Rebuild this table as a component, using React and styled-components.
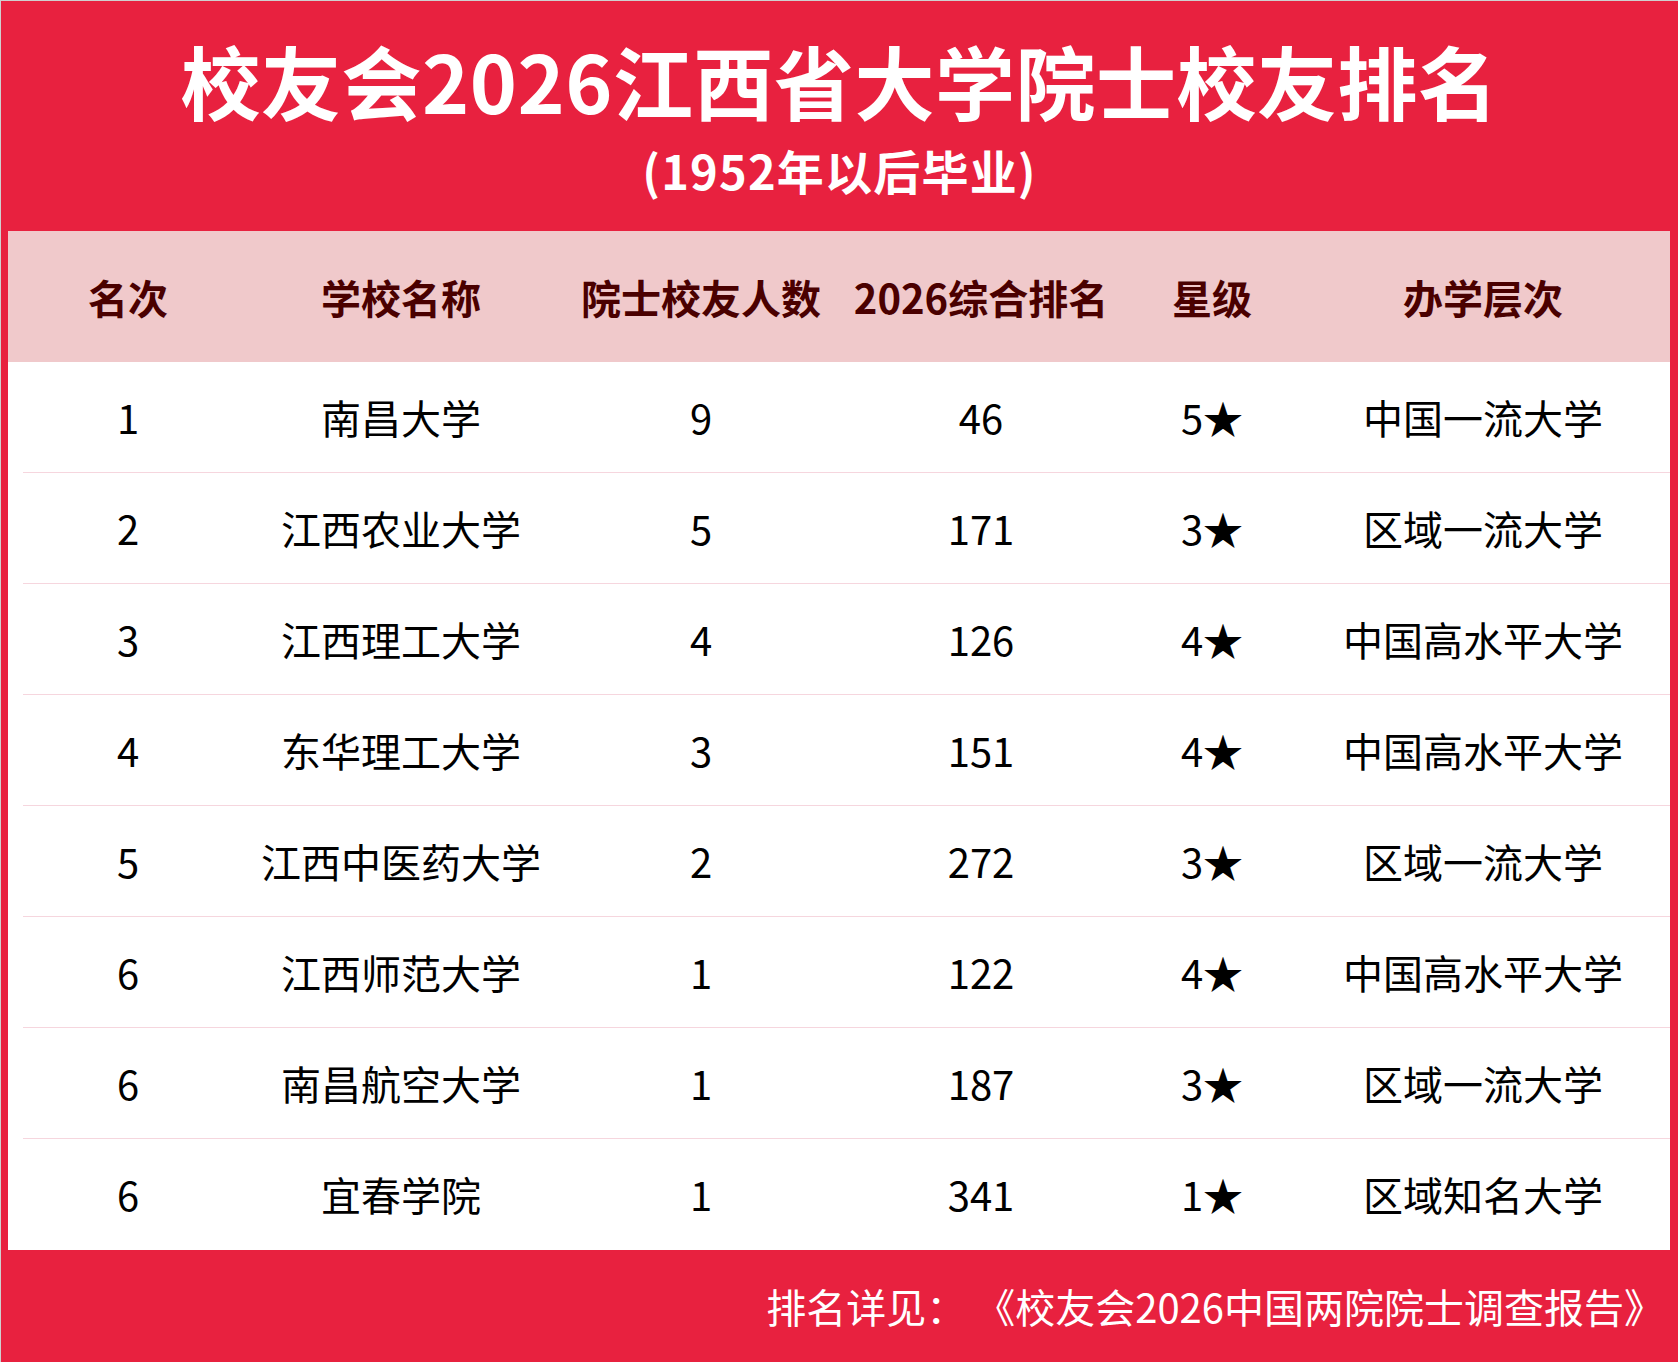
import React from "react";
import styled, { createGlobalStyle } from "styled-components";

const GlobalStyle = createGlobalStyle`
  html, body {
    margin: 0;
    padding: 0;
    background: #ffffff;
  }
  body {
    font-family: "Noto Sans CJK SC", "Noto Sans", sans-serif;
  }
`;

const schools = [
  { rank: 1, name: "南昌大学", count: 9, overall: 46, star: 5, level: "中国一流大学" },
  { rank: 2, name: "江西农业大学", count: 5, overall: 171, star: 3, level: "区域一流大学" },
  { rank: 3, name: "江西理工大学", count: 4, overall: 126, star: 4, level: "中国高水平大学" },
  { rank: 4, name: "东华理工大学", count: 3, overall: 151, star: 4, level: "中国高水平大学" },
  { rank: 5, name: "江西中医药大学", count: 2, overall: 272, star: 3, level: "区域一流大学" },
  { rank: 6, name: "江西师范大学", count: 1, overall: 122, star: 4, level: "中国高水平大学" },
  { rank: 6, name: "南昌航空大学", count: 1, overall: 187, star: 3, level: "区域一流大学" },
  { rank: 6, name: "宜春学院", count: 1, overall: 341, star: 1, level: "区域知名大学" },
];

const columns = ["名次", "学校名称", "院士校友人数", "2026综合排名", "星级", "办学层次"];

function App() {
  return (
    <>
      <GlobalStyle />
      <Page>
        <Banner>
          <Title>校友会2026江西省大学院士校友排名</Title>
          <Subtitle>(1952年以后毕业)</Subtitle>
        </Banner>

        <Panel>
          <HeadRow>
            {columns.map((c, i) => (
              <HeadCell key={c} $last={i === columns.length - 1}>{c}</HeadCell>
            ))}
          </HeadRow>

          <Body>
            {schools.map((s, i) => (
              <Row key={s.name} $last={i === schools.length - 1}>
                <Cell $pad="15px">{s.rank}</Cell>
                <Cell>{s.name}</Cell>
                <Cell>{s.count}</Cell>
                <Cell>{s.overall}</Cell>
                <Cell>{s.star}★</Cell>
                <Cell $pad="14px">{s.level}</Cell>
              </Row>
            ))}
          </Body>
        </Panel>

        <Footer>排名详见：{"\u00a0"}《校友会2026中国两院院士调查报告》</Footer>
      </Page>
    </>
  );
}

const Page = styled.div`
  width: 1678px;
  height: 1362px;
  box-sizing: border-box;
  background: #e8213f;
  border-top: 1px solid #cfcfcf;
  border-left: 1px solid #cfcfcf;
  display: flex;
  flex-direction: column;
`;

const Banner = styled.div`
  height: 230px;
  display: flex;
  flex-direction: column;
  align-items: center;
  color: #ffffff;
  font-weight: 700;
`;

const Title = styled.div`
  margin-top: 28px;
  font-size: 80px;
  line-height: 100px;
  letter-spacing: 0.5px;
`;

const Subtitle = styled.div`
  margin-top: 13px;
  font-size: 47px;
  line-height: 56px;
  letter-spacing: 1.2px;
`;

const Panel = styled.div`
  margin: 0 8px 0 7px;
  background: #ffffff;
`;

const HeadRow = styled.div`
  display: grid;
  grid-template-columns: 240px 306px 294px 266px 196px 1fr;
  height: 131px;
  align-items: center;
  background: #f0c9cb;
`;

const HeadCell = styled.div`
  text-align: center;
  padding-right: ${(p) => (p.$last ? "14px" : "0")};
  font-size: 40px;
  font-weight: 700;
  color: #4a0000;
`;

const Body = styled.div`
  padding-left: 15px;
`;

const Row = styled.div`
  display: grid;
  grid-template-columns: 225px 306px 294px 266px 196px 1fr;
  height: 111px;
  box-sizing: border-box;
  align-items: center;
  border-bottom: 1px solid ${(p) => (p.$last ? "#ffffff" : "#f6d6de")};
`;

const Cell = styled.div`
  text-align: center;
  padding-right: ${(p) => p.$pad || "0"};
  font-size: 40px;
  color: #000000;
`;

const Footer = styled.div`
  flex: 1;
  display: flex;
  align-items: center;
  justify-content: flex-end;
  padding-right: 14px;
  color: #ffffff;
  font-size: 40px;
`;

export default App;
